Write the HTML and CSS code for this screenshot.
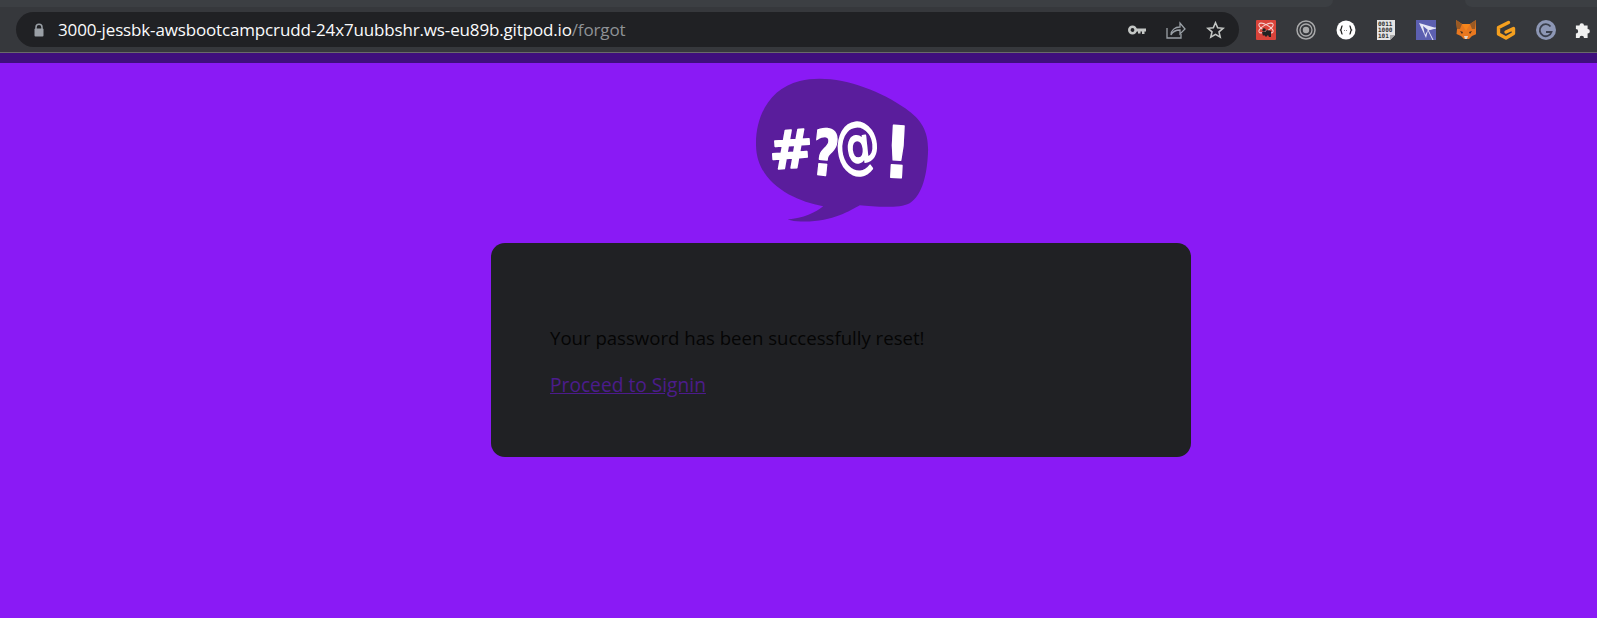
FILE: index.html
```html
<!DOCTYPE html>
<html lang="en">
<head>
  <meta charset="UTF-8" />
  <title>Forgot password</title>
  <link rel="stylesheet" href="styles.css">
</head>
<body>

<!-- browser chrome -->
<div class="tabstrip">
  <div class="tab-edge tab-left"></div>
  <div class="tab-edge tab-right"></div>
</div>
<div class="toolbar">
  <div class="omnibox">
    <svg class="lock" width="12" height="14" viewBox="0 0 12 14"><path d="M3 6V4.200a3 3 0 0 1 6 0V6" fill="none" stroke="#9aa0a6" stroke-width="1.500"/><rect x="1.500" y="5.500" width="9" height="8" rx="1" fill="#9aa0a6"/></svg>
    <span class="url">3000-jessbk-awsbootcampcrudd-24x7uubbshr.ws-eu89b.gitpod.io<span class="url-path">/forgot</span></span>
    <div class="omni-actions">
      <svg width="18" height="10" viewBox="0 0 18 10"><circle cx="4.500" cy="5" r="3.200" fill="none" stroke="#c4c7c5" stroke-width="2.600"/><path d="M8 3.500h10v3h-1.500v2.500h-2.500v-2.500h-1.500v2h-2.500v-2h-2z" fill="#c4c7c5"/></svg>
      <svg width="20" height="19" viewBox="0 0 20 19" fill="none" stroke="#9aa0a6" stroke-width="1.300"><path d="M1 8v10h14v-4"/><path d="M5 15c0-5 4-8 9-8V3l5 6-5 5v-4c-4 0-7 1-9 5z"/></svg>
      <svg width="19" height="18" viewBox="0 0 19 18" fill="none" stroke="#c4c7c5" stroke-width="1.600"><path d="M9.500 1.800l2.200 5 5.400.5-4.100 3.600 1.200 5.300-4.700-2.800-4.700 2.800 1.200-5.300-4.100-3.600 5.400-.5z"/></svg>
    </div>
  </div>
  <div class="extensions">
    <svg width="20" height="20" viewBox="0 0 20 20"><rect width="20" height="20" rx="1" fill="#d9433a"/><g fill="none" stroke="#f6d5d2" stroke-width=".9"><ellipse cx="10" cy="8" rx="8" ry="3" transform="rotate(30 10 8)"/><ellipse cx="10" cy="8" rx="8" ry="3" transform="rotate(-30 10 8)"/></g><circle cx="8" cy="10" r="1.800" fill="#222"/><path d="M6 12h3l2-2 4 1v6h-2l-1-2-2 2-2-2-1 1z" fill="#222"/></svg>
    <svg width="20" height="20" viewBox="0 0 20 20" fill="none"><circle cx="10" cy="10" r="9" stroke="#a8a9aa" stroke-width="1.500"/><circle cx="10" cy="10" r="6" stroke="#a8a9aa" stroke-width="1.300"/><circle cx="10" cy="10" r="3.200" fill="#a8a9aa"/></svg>
    <svg width="20" height="20" viewBox="0 0 20 20"><circle cx="10" cy="10" r="9.500" fill="#fff"/><path d="M6.500 6c-1.500 0-.5 3-2 4 1.500 1 .5 4 2 4M13.500 6c1.500 0 .5 3 2 4-1.500 1-.5 4-2 4" fill="none" stroke="#222" stroke-width="1.300"/><path d="M8 10.500h4" stroke="#888" stroke-dasharray="1 1"/></svg>
    <svg width="20" height="20" viewBox="0 0 20 20"><path d="M1 0h18v15l-5 5H1z" fill="#e4e4e4"/><path d="M14 20v-5h5z" fill="#aaa"/><text class="bin-text" x="2" y="6">0011</text><text class="bin-text" x="2" y="12">1000</text><text class="bin-text" x="2" y="18">101</text></svg>
    <svg width="20" height="20" viewBox="0 0 20 20"><rect width="20" height="20" fill="#5c5fb0"/><path d="M3 3l17 5-8 2-2 8z" fill="#e8e8f6"/><path d="M7 6l5 4-3 5z" fill="#5c5fb0"/><path d="M12 10l8-2M12 10l5 10" stroke="#e8e8f6" fill="none"/></svg>
    <svg width="20" height="20" viewBox="0 0 20 20"><path d="M0 0l6 4h8l6-4 0 9 .5 5-4.500 2-3 3H8l-3-3-4.500-2 .5-5z" fill="#e8781f"/><path d="M0 0l6 4-2 5-3 0zM20 0l-6 4 2 5 3 0z" fill="#9a5a24"/><path d="M6 4l4 7 4-7z" fill="#f6851b"/><path d="M4 11l3 1-1 2zM16 11l-3 1 1 2z" fill="#3a2a20"/><path d="M8 16h4l-1 3H9z" fill="#e6d5c4"/></svg>
    <svg width="20" height="20" viewBox="0 0 20 20" fill="none"><path d="M12.500 2.500L2.500 7.500v6.500L10 18l7.500-4.500v-5L10 12" stroke="#f5a01f" stroke-width="3.400" stroke-linejoin="round" stroke-linecap="round"/></svg>
    <svg width="20" height="20" viewBox="0 0 20 20"><circle cx="10" cy="10" r="10" fill="#8d97b5"/><path d="M14.500 6.500a6 6 0 1 0 1 5.500H10" fill="none" stroke="#3a3f4c" stroke-width="1.800"/></svg>
    <svg class="puzzle" width="18" height="18" viewBox="0 0 20 20"><path d="M1 5h4a2.500 2.500 0 0 1 5 0h4v4a2.500 2.500 0 0 1 0 5v5H10a2.500 2.500 0 0 0-5 0H1v-5a2.500 2.500 0 0 0 0-5z" fill="#f1f1f1"/></svg>
  </div>
</div>
<div class="bookmarks"></div>

<!-- page -->
<main class="page">
  <svg class="logo" width="177" height="147" viewBox="0 0 174 144.500">
    <path d="M3 68C2 38 17 11 46 4c33-8 75 7 104 27 17 12 23 24 22 44-1 20-5 41-18 49-12 6-36 3-49 2-9 5-28 17-58 16-5 0-9-1-13-2 15-1 28-7 35-13C40 122 4 104 3 68z" fill="#5a1d9c"/>
    <text class="logo-glyph" transform="translate(17 91) rotate(-4)" font-size="52">#</text>
    <text class="logo-glyph" transform="translate(56 95) rotate(6) scale(.72 1)" font-size="62">?</text>
    <text class="logo-glyph logo-at" transform="translate(83 89) rotate(-6) scale(.72 1)" font-size="60">@</text>
    <text class="logo-glyph" transform="translate(127 98) rotate(3) scale(.85 1)" font-size="70">!</text>
  </svg>
  <div class="card">
    <p class="message">Your password has been successfully reset!</p>
    <p class="message"><a class="signin" href="#">Proceed to Signin</a></p>
  </div>
</main>

</body>
</html>
```

FILE: styles.css
```css
html, body { height: 100%; }
body { margin: 0; background: #8a1af5; font-family: "Open Sans", "Noto Sans", sans-serif; overflow: hidden; display: flex; flex-direction: column; }

.tabstrip { height: 7px; background: #36383c; display: flex; justify-content: space-between; flex-shrink: 0; }
.tab-edge { height: 7px; background: #3c3f43; }
.tab-left { width: 1333px; border-bottom-right-radius: 8px; }
.tab-right { width: 132px; border-bottom-left-radius: 8px; }

.toolbar { height: 45px; background: #36383c; display: flex; align-items: center; flex-shrink: 0; border-bottom: 1px solid #6a6a6a; }
.omnibox { margin-left: 16px; width: 1223px; height: 35px; border-radius: 18px; background: #202124; display: flex; align-items: center; padding: 0 14px 0 17px; box-sizing: border-box; }
.lock { flex-shrink: 0; margin-right: 13px; }
.url { font-size: 17px; letter-spacing: -0.15px; color: #fafbfc; white-space: nowrap; }
.url-path { color: #8f9296; }
.omni-actions { margin-left: auto; display: flex; align-items: center; gap: 20px; }

.extensions { display: flex; align-items: center; gap: 20px; margin-left: 17px; }
.puzzle { margin-left: -1px; }
.bin-text { font-family: "DejaVu Sans Mono", monospace; font-size: 6px; font-weight: 700; fill: #333; }

.bookmarks { height: 10px; background: #3f0f7d; flex-shrink: 0; }

.page { flex: 1; display: flex; flex-direction: column; align-items: center; padding-left: 85px; }
.logo { margin-top: 14px; }
.logo-glyph { font-family: "DejaVu Sans", sans-serif; font-weight: 700; fill: #fff; stroke: #fff; stroke-width: 1.500px; stroke-linejoin: round; }
.logo-at { font-weight: 400; stroke-width: 2px; }

.card { width: 700px; height: 214px; margin-top: 19px; background: #202124; border-radius: 14px; padding: 82px 59px 0; box-sizing: border-box; }
.message { margin: 0 0 22px; font-size: 18.6px; line-height: 25px; color: #050505; }
.signin { color: #4c1c8c; font-size: 19.2px; }
```
